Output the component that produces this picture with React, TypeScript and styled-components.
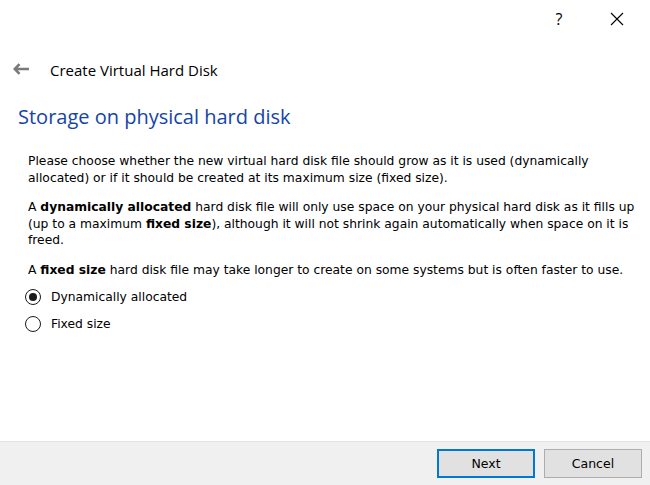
import styled, { createGlobalStyle } from 'styled-components';

const GlobalStyle = createGlobalStyle`
  html, body {
    margin: 0;
    padding: 0;
    background: #fff;
  }
`;

const Window = styled.div`
  width: 650px;
  height: 485px;
  display: flex;
  flex-direction: column;
  background: #fff;
  font-family: "DejaVu Sans", Tahoma, sans-serif;
  color: #000;
  overflow: hidden;
`;

const TitleBar = styled.div`
  height: 38px;
  display: flex;
  justify-content: flex-end;
  align-items: center;
  padding-right: 4px;
`;

const TitleButton = styled.div`
  width: 58px;
  height: 38px;
  display: flex;
  align-items: center;
  justify-content: center;
  font-family: "Segoe UI", "Open Sans", sans-serif;
  font-size: 16px;
  color: #000;
`;

const HeaderRow = styled.div`
  display: flex;
  align-items: center;
  height: 32px;
  margin-top: 16px;
  padding-left: 13px;
`;

const BackArrow = styled.div`
  width: 18px;
  display: flex;
  align-items: center;
  margin-top: -3px;
`;

const HeaderTitle = styled.div`
  margin-left: 19px;
  font-family: "Open Sans", "Segoe UI", sans-serif;
  font-size: 15px;
  color: #000;
`;

const Heading = styled.h1`
  margin: 18px 0 0 18px;
  font-family: "Open Sans", "Segoe UI", sans-serif;
  font-weight: 400;
  font-size: 20px;
  line-height: 26px;
  color: #1544a8;
`;

const Body = styled.div`
  flex: 1;
  padding: 23px 4px 0 28px;
`;

const Para = styled.p`
  margin: 0 0 13px 0;
  font-size: 12.3px;
  line-height: 16.6px;
  white-space: nowrap;
`;

const RadioGroup = styled.div`
  display: flex;
  flex-direction: column;
  gap: 10px;
  margin-left: -3px;
  margin-top: -3px;
`;

const RadioRow = styled.label`
  display: flex;
  align-items: center;
  gap: 10px;
  font-size: 12.3px;
  line-height: 17px;
`;

const RadioCircle = styled.span<{ $checked?: boolean }>`
  width: 16px;
  height: 16px;
  border: 1.3px solid #1a1a1a;
  border-radius: 50%;
  box-sizing: border-box;
  display: flex;
  align-items: center;
  justify-content: center;
  background: #fff;
  &::after {
    content: '';
    width: 8px;
    height: 8px;
    border-radius: 50%;
    background: #1a1a1a;
    display: ${(p) => (p.$checked ? 'block' : 'none')};
  }
`;

const Footer = styled.div`
  height: 44px;
  box-sizing: border-box;
  border-top: 1px solid #e3e3e3;
  background: #f0f0f0;
  display: flex;
  justify-content: flex-end;
  align-items: flex-start;
  padding: 7px 8px 0 0;
  gap: 9px;
`;

const Button = styled.button<{ $primary?: boolean }>`
  width: 98px;
  height: 29px;
  background: #e1e1e1;
  border: 1px solid ${(p) => (p.$primary ? '#0078d7' : '#adadad')};
  box-shadow: ${(p) => (p.$primary ? 'inset 0 0 0 1px #0078d7' : 'none')};
  font-family: "DejaVu Sans", Tahoma, sans-serif;
  font-size: 12.5px;
  color: #000;
  padding: 0;
`;

export default function App() {
  return (
    <Window>
      <GlobalStyle />
      <TitleBar>
        <TitleButton>?</TitleButton>
        <TitleButton>
          <svg width="14" height="14" viewBox="0 0 14 14">
            <path d="M1 1 L13 13 M13 1 L1 13" stroke="#000" strokeWidth="1.1" />
          </svg>
        </TitleButton>
      </TitleBar>
      <HeaderRow>
        <BackArrow>
          <svg width="17" height="12" viewBox="0 0 17 12">
            <path d="M6.5 1.2 L1.8 6 L6.5 10.8 M2 6 H16" stroke="#7a7a7a" strokeWidth="2.6" fill="none" />
          </svg>
        </BackArrow>
        <HeaderTitle>Create Virtual Hard Disk</HeaderTitle>
      </HeaderRow>
      <Heading>Storage on physical hard disk</Heading>
      <Body>
        <Para>
          Please choose whether the new virtual hard disk file should grow as it is used (dynamically
          <br />
          allocated) or if it should be created at its maximum size (fixed size).
        </Para>
        <Para>
          A <b>dynamically allocated</b> hard disk file will only use space on your physical hard disk as it fills up
          <br />
          (up to a maximum <b>fixed size</b>), although it will not shrink again automatically when space on it is
          <br />
          freed.
        </Para>
        <Para>
          A <b>fixed size</b> hard disk file may take longer to create on some systems but is often faster to use.
        </Para>
        <RadioGroup>
          <RadioRow>
            <RadioCircle $checked />
            Dynamically allocated
          </RadioRow>
          <RadioRow>
            <RadioCircle />
            Fixed size
          </RadioRow>
        </RadioGroup>
      </Body>
      <Footer>
        <Button $primary>Next</Button>
        <Button>Cancel</Button>
      </Footer>
    </Window>
  );
}
